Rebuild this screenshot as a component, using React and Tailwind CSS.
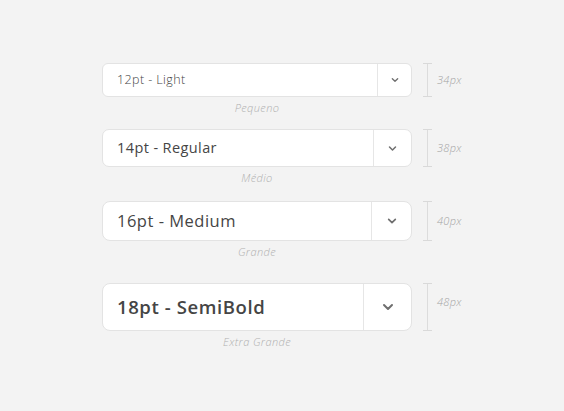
import React from "react";

const rows = [
  { label: "12pt - Light", cap: "Pequeno", px: "34px", h: "h-[34px]", w: "w-[34px]", text: "text-[12.5px] font-light tracking-[0.4px]", chev: 8, radius: "rounded-[6px]", mt: "mt-[63px]", lab: "" },
  { label: "14pt - Regular", cap: "Médio", px: "38px", h: "h-[38px]", w: "w-[38px]", text: "text-[14.5px] font-normal tracking-[0.4px]", chev: 9, radius: "rounded-[7px]", mt: "mt-[15px]", lab: "" },
  { label: "16pt - Medium", cap: "Grande", px: "40px", h: "h-[40px]", w: "w-[40px]", text: "text-[16.5px] font-medium tracking-[0.5px]", chev: 10, radius: "rounded-[8px]", mt: "mt-[17px]", lab: "" },
  { label: "18pt - SemiBold", cap: "Extra Grande", px: "48px", h: "h-[48px]", w: "w-[48px]", text: "text-[18.5px] font-semibold tracking-[0.6px]", chev: 12, radius: "rounded-[8px]", mt: "mt-[25px]", lab: "-translate-y-[5px]" },
];

function Chevron({ size }) {
  return (
    <svg width={size + 2} height={size} viewBox="0 0 12 12" fill="none">
      <polyline points="2,4 6,8 10,4" stroke="#6f6f6f" strokeWidth="2" strokeLinecap="round" strokeLinejoin="round" />
    </svg>
  );
}

export default function App() {
  return (
    <div className="w-[564px] h-[411px] bg-[#f3f3f3] overflow-hidden" style={{ fontFamily: '"Open Sans", "Noto Sans", sans-serif' }}>
      <div className="pl-[102px] flex flex-col">
        {rows.map((r) => (
          <div key={r.label} className={r.mt}>
            <div className="flex items-center">
              <div className={`w-[310px] ${r.h} ${r.radius} bg-white border border-[#e3e3e3] flex items-center`}>
                <div className={`flex-1 pl-[14px] text-[#454545] ${r.text}`}>{r.label}</div>
                <div className={`${r.w} h-full border-l border-[#e6e6e6] flex items-center justify-center`}>
                  <Chevron size={r.chev} />
                </div>
              </div>
              <div className={`ml-[11px] w-[9px] ${r.h} flex flex-col items-center`}>
                <div className="w-[9px] h-px bg-[#d9d9d9]" />
                <div className="w-px flex-1 bg-[#dcdcdc]" />
                <div className="w-[9px] h-px bg-[#d9d9d9]" />
              </div>
              <div className={`ml-[5px] text-[11px] tracking-[0.3px] italic font-light text-[#a3a3a3] ${r.lab}`}>{r.px}</div>
            </div>
            <div className="w-[310px] mt-[5px] text-center text-[11px] tracking-[0.4px] leading-[12px] italic font-light text-[#b0b0b0]">{r.cap}</div>
          </div>
        ))}
      </div>
    </div>
  );
}
